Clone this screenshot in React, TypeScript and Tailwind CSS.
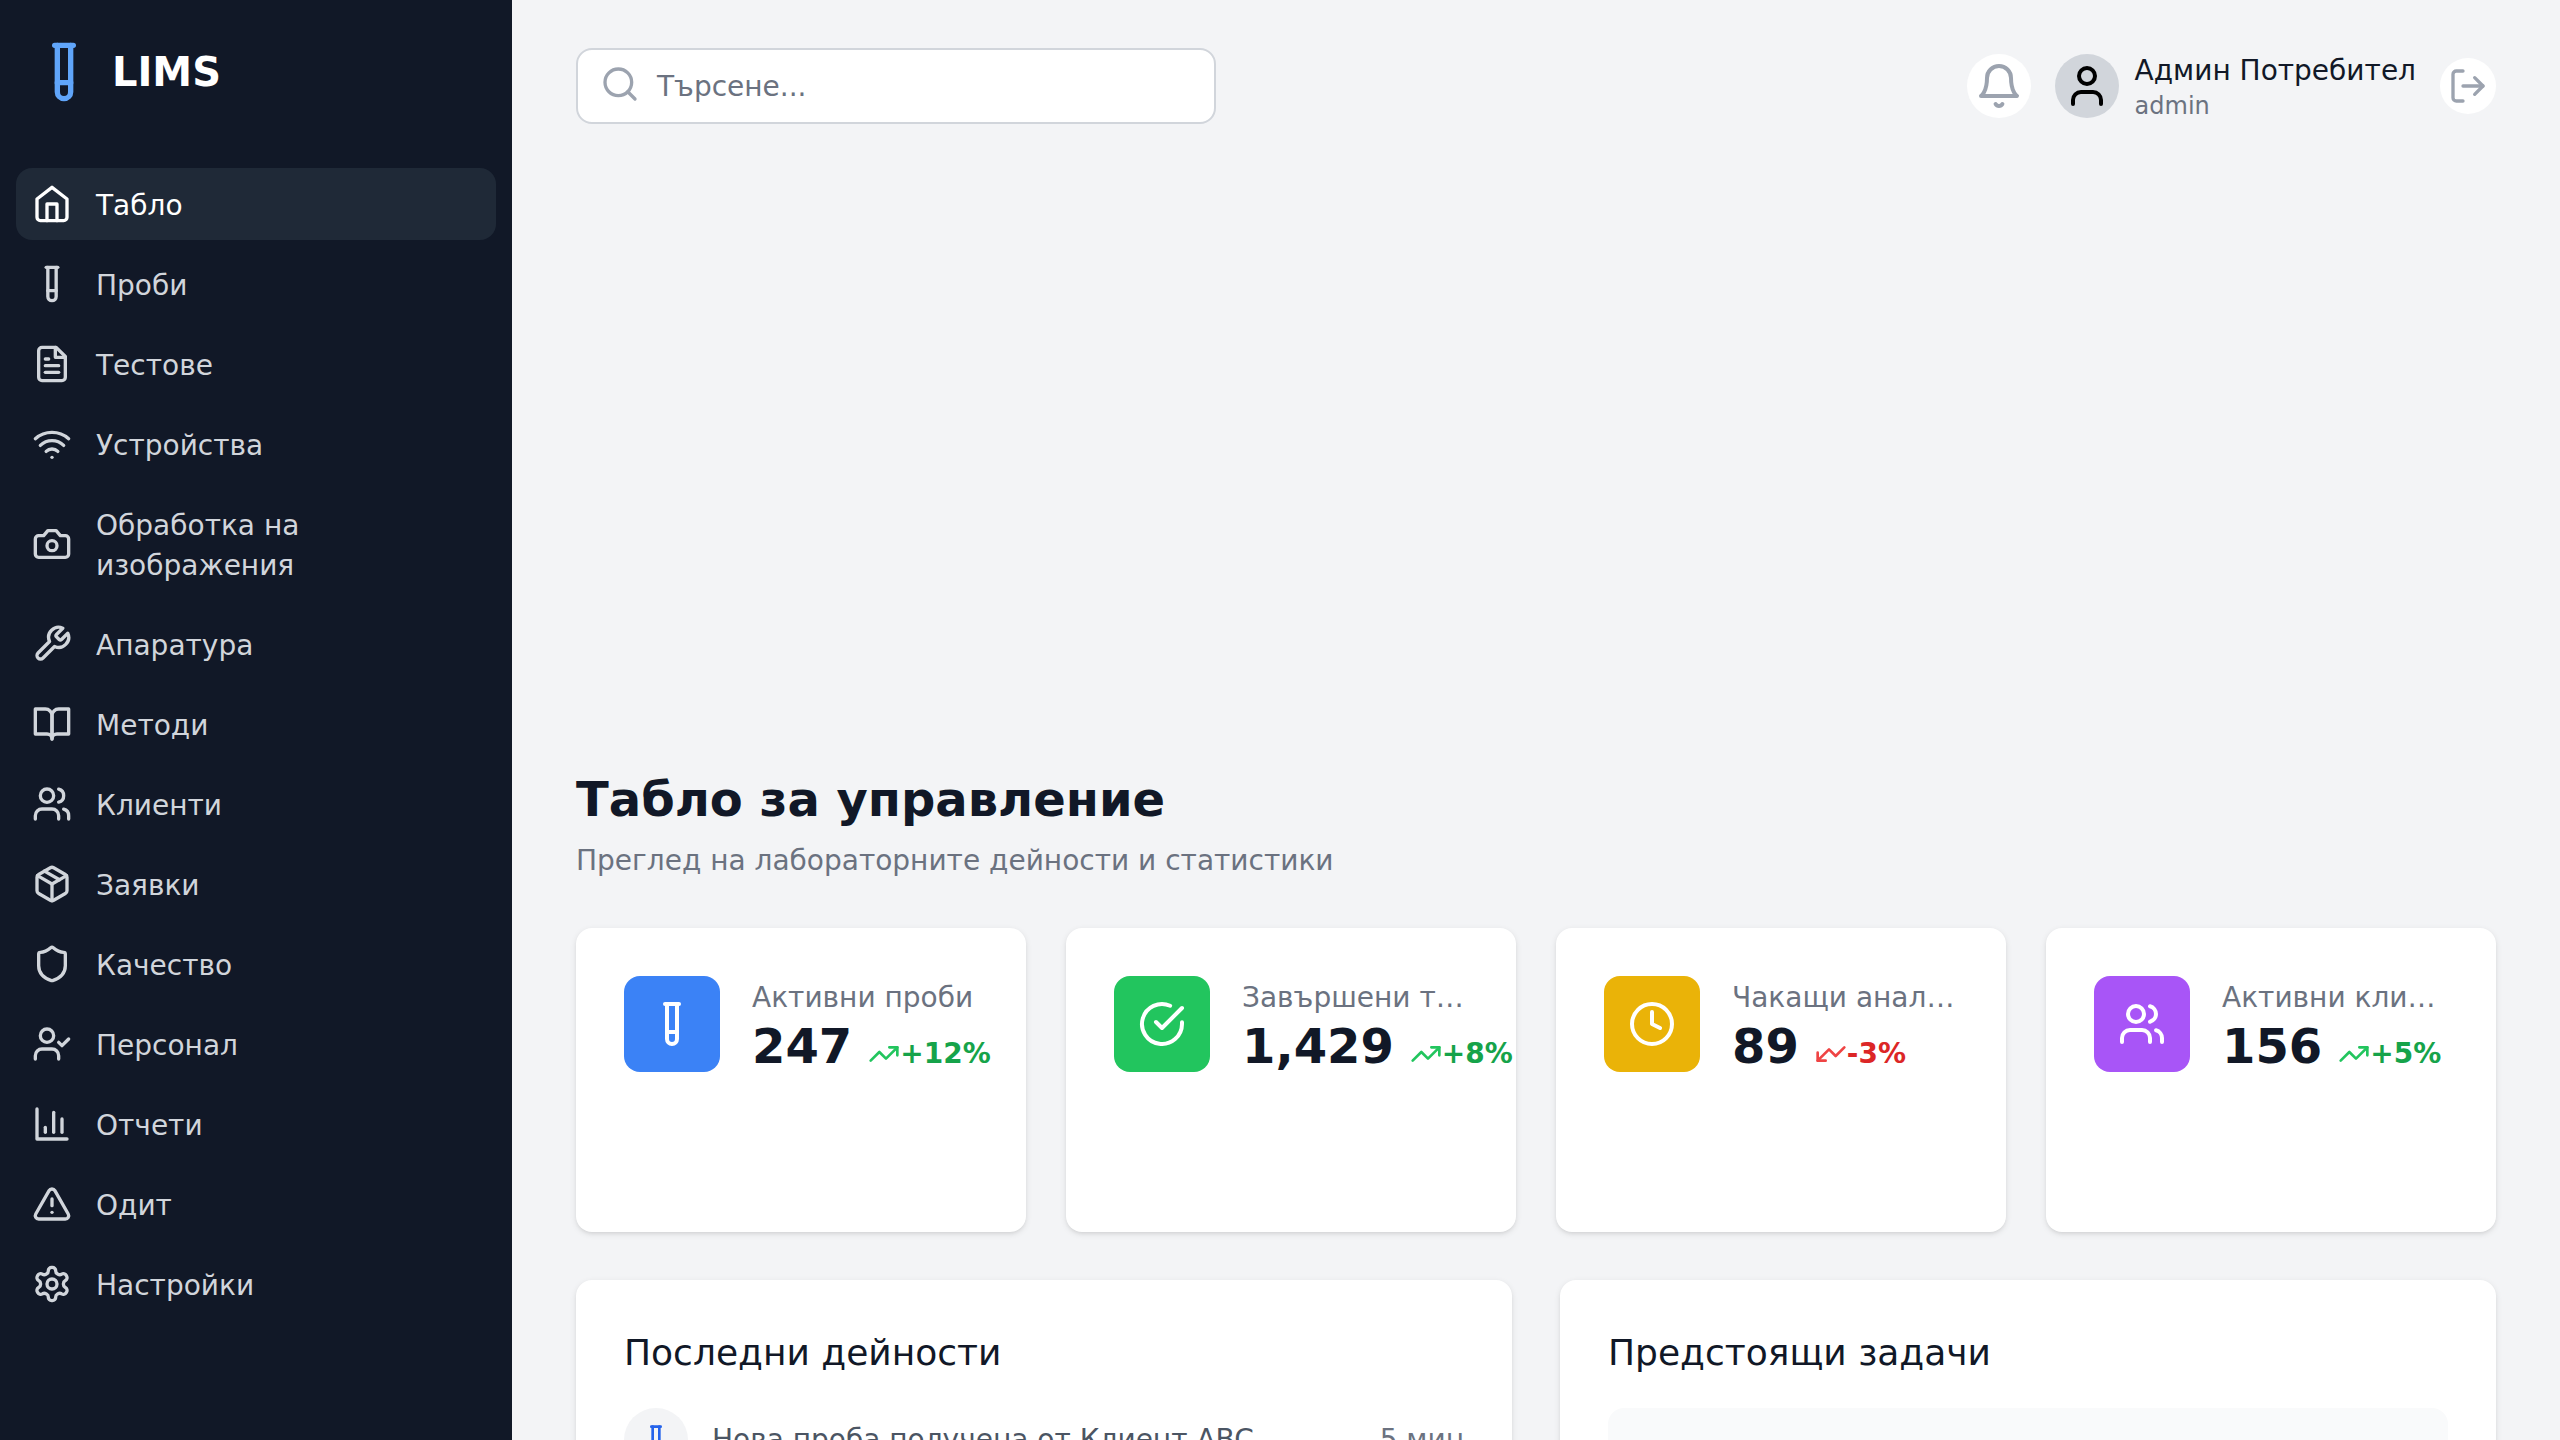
import React from "react";
import { TestTube, Wifi, Users, Package, Shield, UserCheck, TriangleAlert, Search, User, LogOut, Clock, TrendingUp } from "lucide-react";

type IconProps = { className?: string };

function Svg({ className, children }: IconProps & { children: React.ReactNode }) {
  return (
    <svg xmlns="http://www.w3.org/2000/svg" viewBox="0 0 24 24" fill="none" stroke="currentColor" strokeWidth="2" strokeLinecap="round" strokeLinejoin="round" className={className}>
      {children}
    </svg>
  );
}

const Home = (p: IconProps) => (
  <Svg {...p}>
    <path d="m3 9 9-7 9 7v11a2 2 0 0 1-2 2H5a2 2 0 0 1-2-2z" />
    <path d="M9 22V12h6v10" />
  </Svg>
);
const FileText = (p: IconProps) => (
  <Svg {...p}>
    <path d="M14.5 2H6a2 2 0 0 0-2 2v16a2 2 0 0 0 2 2h12a2 2 0 0 0 2-2V7.5L14.5 2z" />
    <path d="M14 2v6h6" />
    <path d="M16 13H8" />
    <path d="M16 17H8" />
    <path d="M10 9H8" />
  </Svg>
);
const Camera = (p: IconProps) => (
  <Svg {...p}>
    <path d="M14.5 4h-5L7 7H4a2 2 0 0 0-2 2v9a2 2 0 0 0 2 2h16a2 2 0 0 0 2-2V9a2 2 0 0 0-2-2h-3l-2.5-3z" />
    <circle cx="12" cy="13" r="3" />
  </Svg>
);
const Wrench = (p: IconProps) => (
  <Svg {...p}>
    <path d="M14.7 6.3a1 1 0 0 0 0 1.4l1.6 1.6a1 1 0 0 0 1.4 0l3.77-3.77a6 6 0 0 1-7.94 7.94l-6.91 6.91a2.12 2.12 0 0 1-3-3l6.91-6.91a6 6 0 0 1 7.94-7.94l-3.76 3.76z" />
  </Svg>
);
const BookOpen = (p: IconProps) => (
  <Svg {...p}>
    <path d="M2 3h6a4 4 0 0 1 4 4v14a3 3 0 0 0-3-3H2z" />
    <path d="M22 3h-6a4 4 0 0 0-4 4v14a3 3 0 0 1 3-3h7z" />
  </Svg>
);
const Chart = (p: IconProps) => (
  <Svg {...p}>
    <path d="M3 3v18h18" />
    <path d="M18 17V9" />
    <path d="M13 17V5" />
    <path d="M8 17v-3" />
  </Svg>
);
const Settings = (p: IconProps) => (
  <Svg {...p}>
    <path d="M12.22 2h-.44a2 2 0 0 0-2 2v.18a2 2 0 0 1-1 1.73l-.43.25a2 2 0 0 1-2 0l-.15-.08a2 2 0 0 0-2.73.73l-.22.38a2 2 0 0 0 .73 2.73l.15.1a2 2 0 0 1 1 1.72v.51a2 2 0 0 1-1 1.74l-.15.09a2 2 0 0 0-.73 2.73l.22.38a2 2 0 0 0 2.73.73l.15-.08a2 2 0 0 1 2 0l.43.25a2 2 0 0 1 1 1.73V20a2 2 0 0 0 2 2h.44a2 2 0 0 0 2-2v-.18a2 2 0 0 1 1-1.73l.43-.25a2 2 0 0 1 2 0l.15.08a2 2 0 0 0 2.73-.73l.22-.39a2 2 0 0 0-.73-2.73l-.15-.08a2 2 0 0 1-1-1.74v-.5a2 2 0 0 1 1-1.74l.15-.09a2 2 0 0 0 .73-2.73l-.22-.38a2 2 0 0 0-2.73-.73l-.15.08a2 2 0 0 1-2 0l-.43-.25a2 2 0 0 1-1-1.73V4a2 2 0 0 0-2-2z" />
    <circle cx="12" cy="12" r="3" />
  </Svg>
);
const Bell = (p: IconProps) => (
  <Svg {...p}>
    <path d="M6 8a6 6 0 0 1 12 0c0 7 3 9 3 9H3s3-2 3-9" />
    <path d="M10.3 21a1.94 1.94 0 0 0 3.4 0" />
  </Svg>
);
const CheckBig = (p: IconProps) => (
  <Svg {...p}>
    <path d="M22 11.08V12a10 10 0 1 1-5.93-9.14" />
    <path d="m9 11 3 3L22 4" />
  </Svg>
);

const nav = [
  { label: "Табло", Icon: Home, active: true },
  { label: "Проби", Icon: TestTube },
  { label: "Тестове", Icon: FileText },
  { label: "Устройства", Icon: Wifi },
  { label: "Обработка на изображения", Icon: Camera },
  { label: "Апаратура", Icon: Wrench },
  { label: "Методи", Icon: BookOpen },
  { label: "Клиенти", Icon: Users },
  { label: "Заявки", Icon: Package },
  { label: "Качество", Icon: Shield },
  { label: "Персонал", Icon: UserCheck },
  { label: "Отчети", Icon: Chart },
  { label: "Одит", Icon: TriangleAlert },
  { label: "Настройки", Icon: Settings },
];

const stats = [
  { label: "Активни проби", value: "247", change: "+12%", up: true, bg: "bg-[#3b82f6]", Icon: TestTube },
  { label: "Завършени тестове", value: "1,429", change: "+8%", up: true, bg: "bg-[#22c55e]", Icon: CheckBig },
  { label: "Чакащи анализи", value: "89", change: "-3%", up: false, bg: "bg-[#eab308]", Icon: Clock },
  { label: "Активни клиенти", value: "156", change: "+5%", up: true, bg: "bg-[#a855f7]", Icon: Users },
];

const cardShadow = "shadow-[0_2px_6px_0_rgba(0,0,0,0.1),0_2px_4px_-2px_rgba(0,0,0,0.1)]";

export default function App() {
  return (
    <div className="flex h-screen overflow-hidden bg-[#f3f4f6] font-['DejaVu_Sans',sans-serif]">
      <aside className="w-[512px] shrink-0 bg-[#111827]">
        <div className="flex items-center gap-4 px-8 pt-10 pb-16">
          <TestTube className="size-16 text-[#60a5fa]" />
          <span className="text-[40px] leading-[56px] font-bold text-white">LIMS</span>
        </div>
        <nav className="flex flex-col gap-2 px-4">
          {nav.map(({ label, Icon, active }) => (
            <a key={label} className={`flex items-center gap-6 rounded-2xl px-4 py-4 text-[28px] leading-10 ${active ? "bg-[#1f2937] text-white" : "text-[#d1d5db]"}`}>
              <Icon className="size-10 shrink-0" />
              <span className="mt-[2px] -mb-[2px]">{label}</span>
            </a>
          ))}
        </nav>
      </aside>
      <main className="min-w-0 flex-1 overflow-hidden">
        <header className="flex items-center justify-between px-16 py-12">
          <div className="relative w-[640px]">
            <Search className="absolute top-4 left-6 size-10 text-[#9ca3af]" />
            <div className="rounded-2xl border-2 border-[#d1d5db] bg-white pt-[17px] pr-6 pb-[15px] pl-[79px] text-[28px] leading-10 text-[#6b7280]">Търсене...</div>
          </div>
          <div className="flex items-center gap-6">
            <button className="rounded-full bg-white p-2"><Bell className="size-12 text-[#9ca3af]" /></button>
            <div className="flex items-center gap-4">
              <div className="flex size-16 items-center justify-center rounded-full bg-[#d1d5db]"><User className="size-12 text-black" /></div>
              <div>
                <div className="pt-[2px] text-[28px] leading-[38px] text-[#111827]">Админ Потребител</div>
                <div className="text-2xl leading-8 text-[#6b7280]">admin</div>
              </div>
            </div>
            <button className="rounded-full bg-white p-2"><LogOut className="size-10 text-[#9ca3af]" /></button>
          </div>
        </header>
        <div className="px-16 pt-[595px]">
          <h1 className="text-5xl leading-16 font-bold text-[#111827]">Табло за управление</h1>
          <p className="mt-[10px] mb-[47px] text-[28px] leading-10 text-[#6b7280]">Преглед на лабораторните дейности и статистики</p>
          <div className="grid grid-cols-4 gap-10">
            {stats.map(({ label, value, change, up, bg, Icon }) => (
              <div key={label} className={`h-[304px] rounded-2xl bg-white p-12 ${cardShadow}`}>
                <div className="flex items-start">
                  <div className={`flex size-24 shrink-0 items-center justify-center rounded-2xl ${bg}`}><Icon className="size-12 text-white" /></div>
                  <div className="ml-8 min-w-0">
                    <div className="mt-[2px] -mb-[4px] truncate text-[28px] leading-10 text-[#6b7280]">{label}</div>
                    <div className="flex items-baseline">
                      <span className="text-5xl leading-16 font-bold text-[#111827]">{value}</span>
                      <span className={`ml-4 flex items-baseline text-[28px] leading-10 font-semibold ${up ? "text-[#16a34a]" : "text-[#dc2626]"}`}>
                        <TrendingUp className={`size-8 shrink-0 self-center ${up ? "text-[#22c55e]" : "rotate-180 text-[#ef4444]"}`} />
                        {change}
                      </span>
                    </div>
                  </div>
                </div>
              </div>
            ))}
          </div>
          <div className="mt-12 grid grid-cols-2 gap-12">
            <section className={`rounded-2xl bg-white p-12 ${cardShadow}`}>
              <h2 className="-mt-[3px] mb-[27px] text-4xl leading-14 text-[#111827]">Последни дейности</h2>
              <div className="flex items-center">
                <div className="flex size-16 shrink-0 items-center justify-center rounded-full bg-[#f3f4f6]"><TestTube className="size-8 text-[#2563eb]" /></div>
                <span className="ml-6 flex-1 text-[28px] leading-10 text-[#4b5563]">Нова проба получена от Клиент ABC</span>
                <span className="text-[28px] leading-10 text-[#6b7280]">5 мин</span>
              </div>
            </section>
            <section className={`rounded-2xl bg-white p-12 ${cardShadow}`}>
              <h2 className="-mt-[3px] mb-[27px] text-4xl leading-14 text-[#111827]">Предстоящи задачи</h2>
              <div className="h-[120px] rounded-2xl bg-[#f9fafb]"></div>
            </section>
          </div>
        </div>
      </main>
    </div>
  );
}
